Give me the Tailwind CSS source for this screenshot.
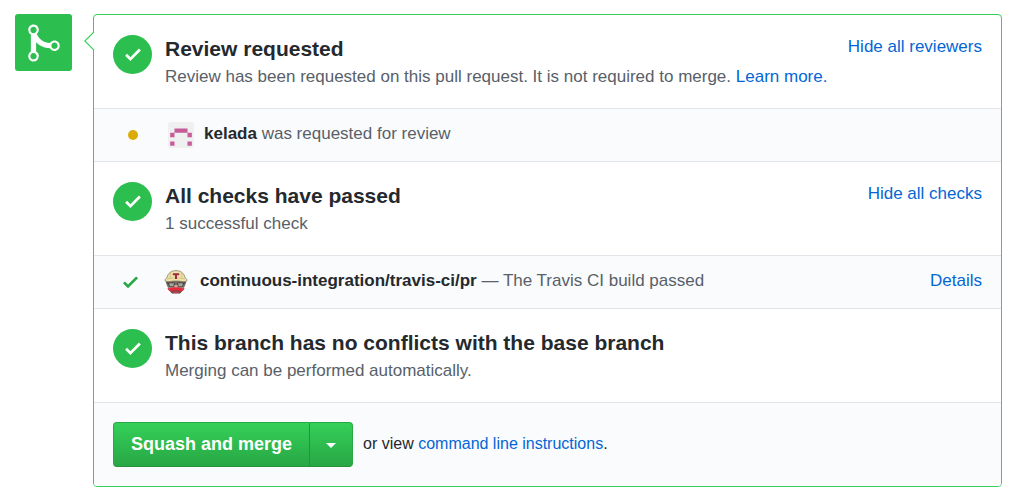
<!DOCTYPE html>
<html lang="en">
<head>
<meta charset="utf-8">
<meta name="viewport" content="width=device-width, initial-scale=1">
<title>Merge status</title>
<script src="https://cdn.jsdelivr.net/npm/@tailwindcss/browser@4"></script>
</head>
<body class="bg-white font-['Liberation_Sans',Arial,sans-serif] text-[17px] leading-6 text-[#586069]">
<svg class="hidden">
  <symbol id="check" viewBox="0 0 12 16"><path d="M12 5l-8 8-4-4 1.5-1.5L4 10l6.5-6.5z" fill="currentColor"/></symbol>
</svg>
<main class="flex items-start gap-[21px] py-3.5 pr-[15px] pl-[15px]">
  <div class="flex size-[57px] shrink-0 items-center justify-center rounded-[3px] bg-[#2cbe4e] text-white">
    <svg class="h-[42px] w-8" viewBox="0 0 12 16" fill="currentColor" aria-hidden="true"><path d="M10 7c-.73 0-1.38.41-1.73 1.02V8C7.22 7.98 6 7.64 5.14 6.98c-.75-.58-1.5-1.61-1.89-2.44A1.993 1.993 0 0 0 2 .99C.89.99 0 1.89 0 3a2 2 0 0 0 1 1.72v6.56c-.59.35-1 .99-1 1.72 0 1.11.89 2 2 2a1.993 1.993 0 0 0 1-3.72V7.67c.67.7 1.44 1.27 2.3 1.69.86.42 2.03.63 2.97.64v-.02c.36.61 1 1.02 1.73 1.02 1.11 0 2-.89 2-2 0-1.11-.89-2-2-2zm-6.8 6c0 .66-.55 1.2-1.2 1.2-.65 0-1.2-.55-1.2-1.2 0-.65.55-1.2 1.2-1.2.65 0 1.2.55 1.2 1.2zm0-10c0 .66-.55 1.2-1.2 1.2C1.34 4.2.8 3.65.8 3c0-.65.55-1.2 1.2-1.2.65 0 1.2.55 1.2 1.2zm8 6c0 .66-.55 1.2-1.2 1.2-.65 0-1.2-.55-1.2-1.2 0-.65.55-1.2 1.2-1.2.65 0 1.2.55 1.2 1.2z"/></svg>
  </div>
  <div class="relative min-w-0 flex-1 rounded-[4px] border border-[#34d058]">
    <svg class="absolute top-4 -left-[10px] h-5 w-[11px]" viewBox="0 0 11 20" aria-hidden="true"><path d="M11 0.5L1 10l10 9.500z" fill="#fff"/><path d="M10 .8L.8 10l9.200 9.200" fill="none" stroke="#34d058" stroke-width="1.200"/></svg>

    <section class="flex items-start gap-[13px] border-b border-[#e1e4e8] px-[19px] pt-5 pb-[19px]">
      <span class="flex size-[39px] shrink-0 items-center justify-center rounded-full bg-[#2cbe4e] text-white"><svg class="h-[21px] w-4"><use href="#check"/></svg></span>
      <div class="min-w-0 flex-1">
        <h2 class="pb-0.5 text-[21px] leading-7 font-bold text-[#24292e]">Review requested</h2>
        <p>Review has been requested on this pull request. It is not required to merge. <a href="#" class="text-[#0366d6]">Learn more.</a></p>
      </div>
      <a href="#" class="text-[#0366d6]">Hide all reviewers</a>
    </section>
    <div class="flex h-[53px] items-center border-b border-[#e1e4e8] bg-[#fafbfc] px-[19px]">
      <span class="flex w-[39px] justify-center"><span class="size-2.5 rounded-full bg-[#dbab09]"></span></span>
      <svg class="ml-4 size-[26px] rounded-[3px]" viewBox="0 0 420 420" aria-hidden="true"><path d="M0 0h420v420H0z" fill="#f0f0f0"/><path d="M105 105h210v70H105zM35 175h70v70H35zM315 175h70v70h-70zM35 315h70v70H35zM315 315h70v70h-70z" fill="#c65c98"/></svg>
      <p class="ml-2.5 pb-0.5"><strong class="text-[#24292e]">kelada</strong> was requested for review</p>
    </div>

    <section class="flex items-start gap-[13px] border-b border-[#e1e4e8] px-[19px] pt-5 pb-[19px]">
      <span class="flex size-[39px] shrink-0 items-center justify-center rounded-full bg-[#2cbe4e] text-white"><svg class="h-[21px] w-4"><use href="#check"/></svg></span>
      <div class="min-w-0 flex-1">
        <h2 class="pb-0.5 text-[21px] leading-7 font-bold text-[#24292e]">All checks have passed</h2>
        <p>1 successful check</p>
      </div>
      <a href="#" class="text-[#0366d6]">Hide all checks</a>
    </section>
    <div class="flex h-[53px] items-center border-b border-[#e1e4e8] bg-[#fafbfc] px-[19px]">
      <span class="flex w-[35px] justify-center text-[#28a745]"><svg class="h-5 w-[15px]"><use href="#check"/></svg></span>
      <svg class="ml-4 size-6" viewBox="0 0 24 24" aria-hidden="true">
        <path d="M3 11l1 8 4 4h8l4-4 1-8z" fill="#b59c88"/>
        <path d="M2 11l1 5 2 2 1-5h12l1 5 2-2 1-5z" fill="#77726b"/>
        <path d="M1 11C1 9 2 8 3 8 3.500 3.500 7 .6 12 .6S20.500 3.500 21 8c1 0 2 1 2 3-3 1.500-5 0-11 0s-8 1.500-11 0z" fill="#efe2a8" stroke="#7d765c" stroke-width=".7"/>
        <path d="M6.500 3L6 8M17.500 3l.5 5M3.500 9c5-1.500 12-1.500 17 0" fill="none" stroke="#c4b57c" stroke-width=".7"/>
        <path d="M8.800 3.200h6.400v2h-2.200V9h-2V5.200H8.800z" fill="#9f2842"/>
        <path d="M4.500 12.800h6l-.8 4H5.500zM13.500 12.800h6l-1 4h-4.200z" fill="#aaa59e" stroke="#4a4643"/>
        <path d="M2 13h2.500M10.500 14h3M19.500 13H22" stroke="#3b3836"/>
        <path d="M11 15h2l1 3h-4z" fill="#d3a68b"/>
        <path d="M5 20l3 3.500h8l3-3.500z" fill="#5a4b46"/>
        <path d="M12 17.500c-3-1-5 1.300-8.500.8C4.500 21.500 8 22.500 11 20.500h2c3 2 6.500 1 7.500-2.200-3.500.5-5.500-1.800-8.500-.8z" fill="#e22b3e"/>
        <path d="M9 21.800h6l-1 1.500h-4z" fill="#d64452"/>
      </svg>
      <p class="ml-3 min-w-0 flex-1 pb-0.5"><strong class="text-[#24292e]">continuous-integration/travis-ci/pr</strong> — The Travis CI build passed</p>
      <a href="#" class="pb-0.5 text-[#0366d6]">Details</a>
    </div>

    <section class="flex items-start gap-[13px] border-b border-[#e1e4e8] px-[19px] pt-5 pb-[19px]">
      <span class="flex size-[39px] shrink-0 items-center justify-center rounded-full bg-[#2cbe4e] text-white"><svg class="h-[21px] w-4"><use href="#check"/></svg></span>
      <div class="min-w-0 flex-1">
        <h2 class="pb-0.5 text-[21px] leading-7 font-bold text-[#24292e]">This branch has no conflicts with the base branch</h2>
        <p>Merging can be performed automatically.</p>
      </div>
    </section>
    <div class="flex items-center gap-2.5 rounded-b-[3px] bg-[#fafbfc] px-[19px] py-[19px]">
      <div class="flex text-white">
        <button type="button" class="h-[45px] rounded-l-[4px] border border-[#28a745] border-b-[#249339] border-r-[#249339] bg-linear-to-b from-[#34d058] to-[#28a745] px-[17px] pb-0.5 text-[18px] font-bold">Squash and merge</button>
        <button type="button" aria-label="Select merge method" class="flex h-[45px] w-[43px] items-center justify-center rounded-r-[4px] border border-l-0 border-[#28a745] border-b-[#249339] bg-linear-to-b from-[#34d058] to-[#28a745]"><svg class="mt-0.5 h-[5px] w-2.5" viewBox="0 0 10 5" fill="currentColor"><path d="M0 0h10L5 5z"/></svg></button>
      </div>
      <p class="pb-0.5 text-[16px] text-[#24292e]">or view <a href="#" class="text-[#0366d6]">command line instructions</a>.</p>
    </div>
  </div>
</main>
</body>
</html>
